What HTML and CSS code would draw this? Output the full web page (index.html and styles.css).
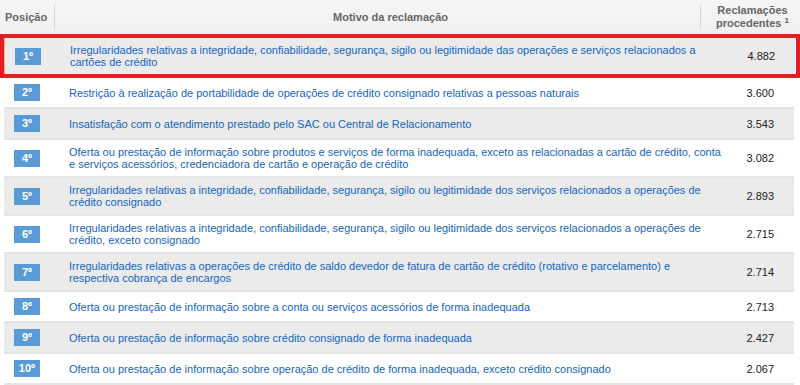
FILE: index.html
```html
<!DOCTYPE html>
<html lang="pt-BR">
<head>
  <meta charset="UTF-8">
  <title>Ranking de reclamações</title>
  <link rel="stylesheet" href="styles.css">
</head>
<body>
  <div class="ranking">
    <!-- cabeçalho -->
    <div class="head">
      <div class="h-pos"><span>Posição</span></div>
      <div class="h-motivo"><span>Motivo da reclamação</span></div>
      <div class="h-qtd"><span>Reclamações<br>procedentes <sup>1</sup></span></div>
    </div>

    <div class="row alt top">
      <div class="pos"><span class="badge">1º</span></div>
      <div class="motivo"><a href="#">Irregularidades relativas a integridade, confiabilidade, segurança, sigilo ou legitimidade das operações e serviços relacionados a cartões de crédito</a></div>
      <div class="qtd">4.882</div>
    </div>
    <div class="row">
      <div class="pos"><span class="badge">2º</span></div>
      <div class="motivo"><a href="#">Restrição à realização de portabilidade de operações de crédito consignado relativas a pessoas naturais</a></div>
      <div class="qtd">3.600</div>
    </div>
    <div class="row alt">
      <div class="pos"><span class="badge">3º</span></div>
      <div class="motivo"><a href="#">Insatisfação com o atendimento prestado pelo SAC ou Central de Relacionamento</a></div>
      <div class="qtd">3.543</div>
    </div>
    <div class="row">
      <div class="pos"><span class="badge">4º</span></div>
      <div class="motivo"><a href="#">Oferta ou prestação de informação sobre produtos e serviços de forma inadequada, exceto as relacionadas a cartão de crédito, conta e serviços acessórios, credenciadora de cartão e operação de crédito</a></div>
      <div class="qtd">3.082</div>
    </div>
    <div class="row alt">
      <div class="pos"><span class="badge">5º</span></div>
      <div class="motivo"><a href="#">Irregularidades relativas a integridade, confiabilidade, segurança, sigilo ou legitimidade dos serviços relacionados a operações de crédito consignado</a></div>
      <div class="qtd">2.893</div>
    </div>
    <div class="row">
      <div class="pos"><span class="badge">6º</span></div>
      <div class="motivo"><a href="#">Irregularidades relativas a integridade, confiabilidade, segurança, sigilo ou legitimidade dos serviços relacionados a operações de crédito, exceto consignado</a></div>
      <div class="qtd">2.715</div>
    </div>
    <div class="row alt">
      <div class="pos"><span class="badge">7º</span></div>
      <div class="motivo"><a href="#">Irregularidades relativas a operações de crédito de saldo devedor de fatura de cartão de crédito (rotativo e parcelamento) e<br>respectiva cobrança de encargos</a></div>
      <div class="qtd">2.714</div>
    </div>
    <div class="row">
      <div class="pos"><span class="badge">8º</span></div>
      <div class="motivo"><a href="#">Oferta ou prestação de informação sobre a conta ou serviços acessórios de forma inadequada</a></div>
      <div class="qtd">2.713</div>
    </div>
    <div class="row alt">
      <div class="pos"><span class="badge">9º</span></div>
      <div class="motivo"><a href="#">Oferta ou prestação de informação sobre crédito consignado de forma inadequada</a></div>
      <div class="qtd">2.427</div>
    </div>
    <div class="row">
      <div class="pos"><span class="badge">10º</span></div>
      <div class="motivo"><a href="#">Oferta ou prestação de informação sobre operação de crédito de forma inadequada, exceto crédito consignado</a></div>
      <div class="qtd">2.067</div>
    </div>
  </div>
</body>
</html>
```

FILE: styles.css
```css
/* ====== Base ====== */
body{margin:0;background:#fff;font-family:"Liberation Sans",Arial,sans-serif;font-size:11px;color:#222}
.ranking{width:800px}

/* ====== Cabeçalho ====== */
.head{display:grid;grid-template-columns:55px 1fr 100px;height:34px;align-items:center;background:linear-gradient(#f6f6f6,#f0f0f0);color:#666;font-weight:bold}
.head > div{display:flex;align-items:center;justify-content:center;height:24px;line-height:13px;text-align:center}
.h-pos{border-right:1px solid #d4d4d4;justify-content:flex-start !important;padding-left:5px}
.h-motivo{padding-left:26px}
.h-qtd{border-left:1px solid #d4d4d4;padding-left:4px}
.h-qtd sup{font-size:8px;vertical-align:4px;line-height:0}

/* ====== Linhas ====== */
.row{display:grid;grid-template-columns:65px 1fr 70px;margin-left:4px;width:790px;align-items:center;border-bottom:2px solid #e4e4e4;line-height:12px;background:#fff}
.row.alt{background:#ebebeb}
.row > div{padding:6px 0}
.motivo a{color:#1565c0;text-decoration:none}
.pos{padding-left:10px !important}
.qtd{text-align:right;padding-right:20px !important}

.badge{display:inline-block;width:26px;height:17px;line-height:17px;background:#5b9bd5;color:#fff;font-weight:bold;text-align:center;vertical-align:middle}

/* primeiro lugar em destaque */
.row.top{position:relative;border-bottom:0;border-left:1px solid #f3b27a;margin-top:4px;margin-bottom:4px}
.row.top::after{content:"";position:absolute;left:-5px;right:-5px;top:-4px;bottom:-4px;border:4px solid #e41e23;pointer-events:none}
```
